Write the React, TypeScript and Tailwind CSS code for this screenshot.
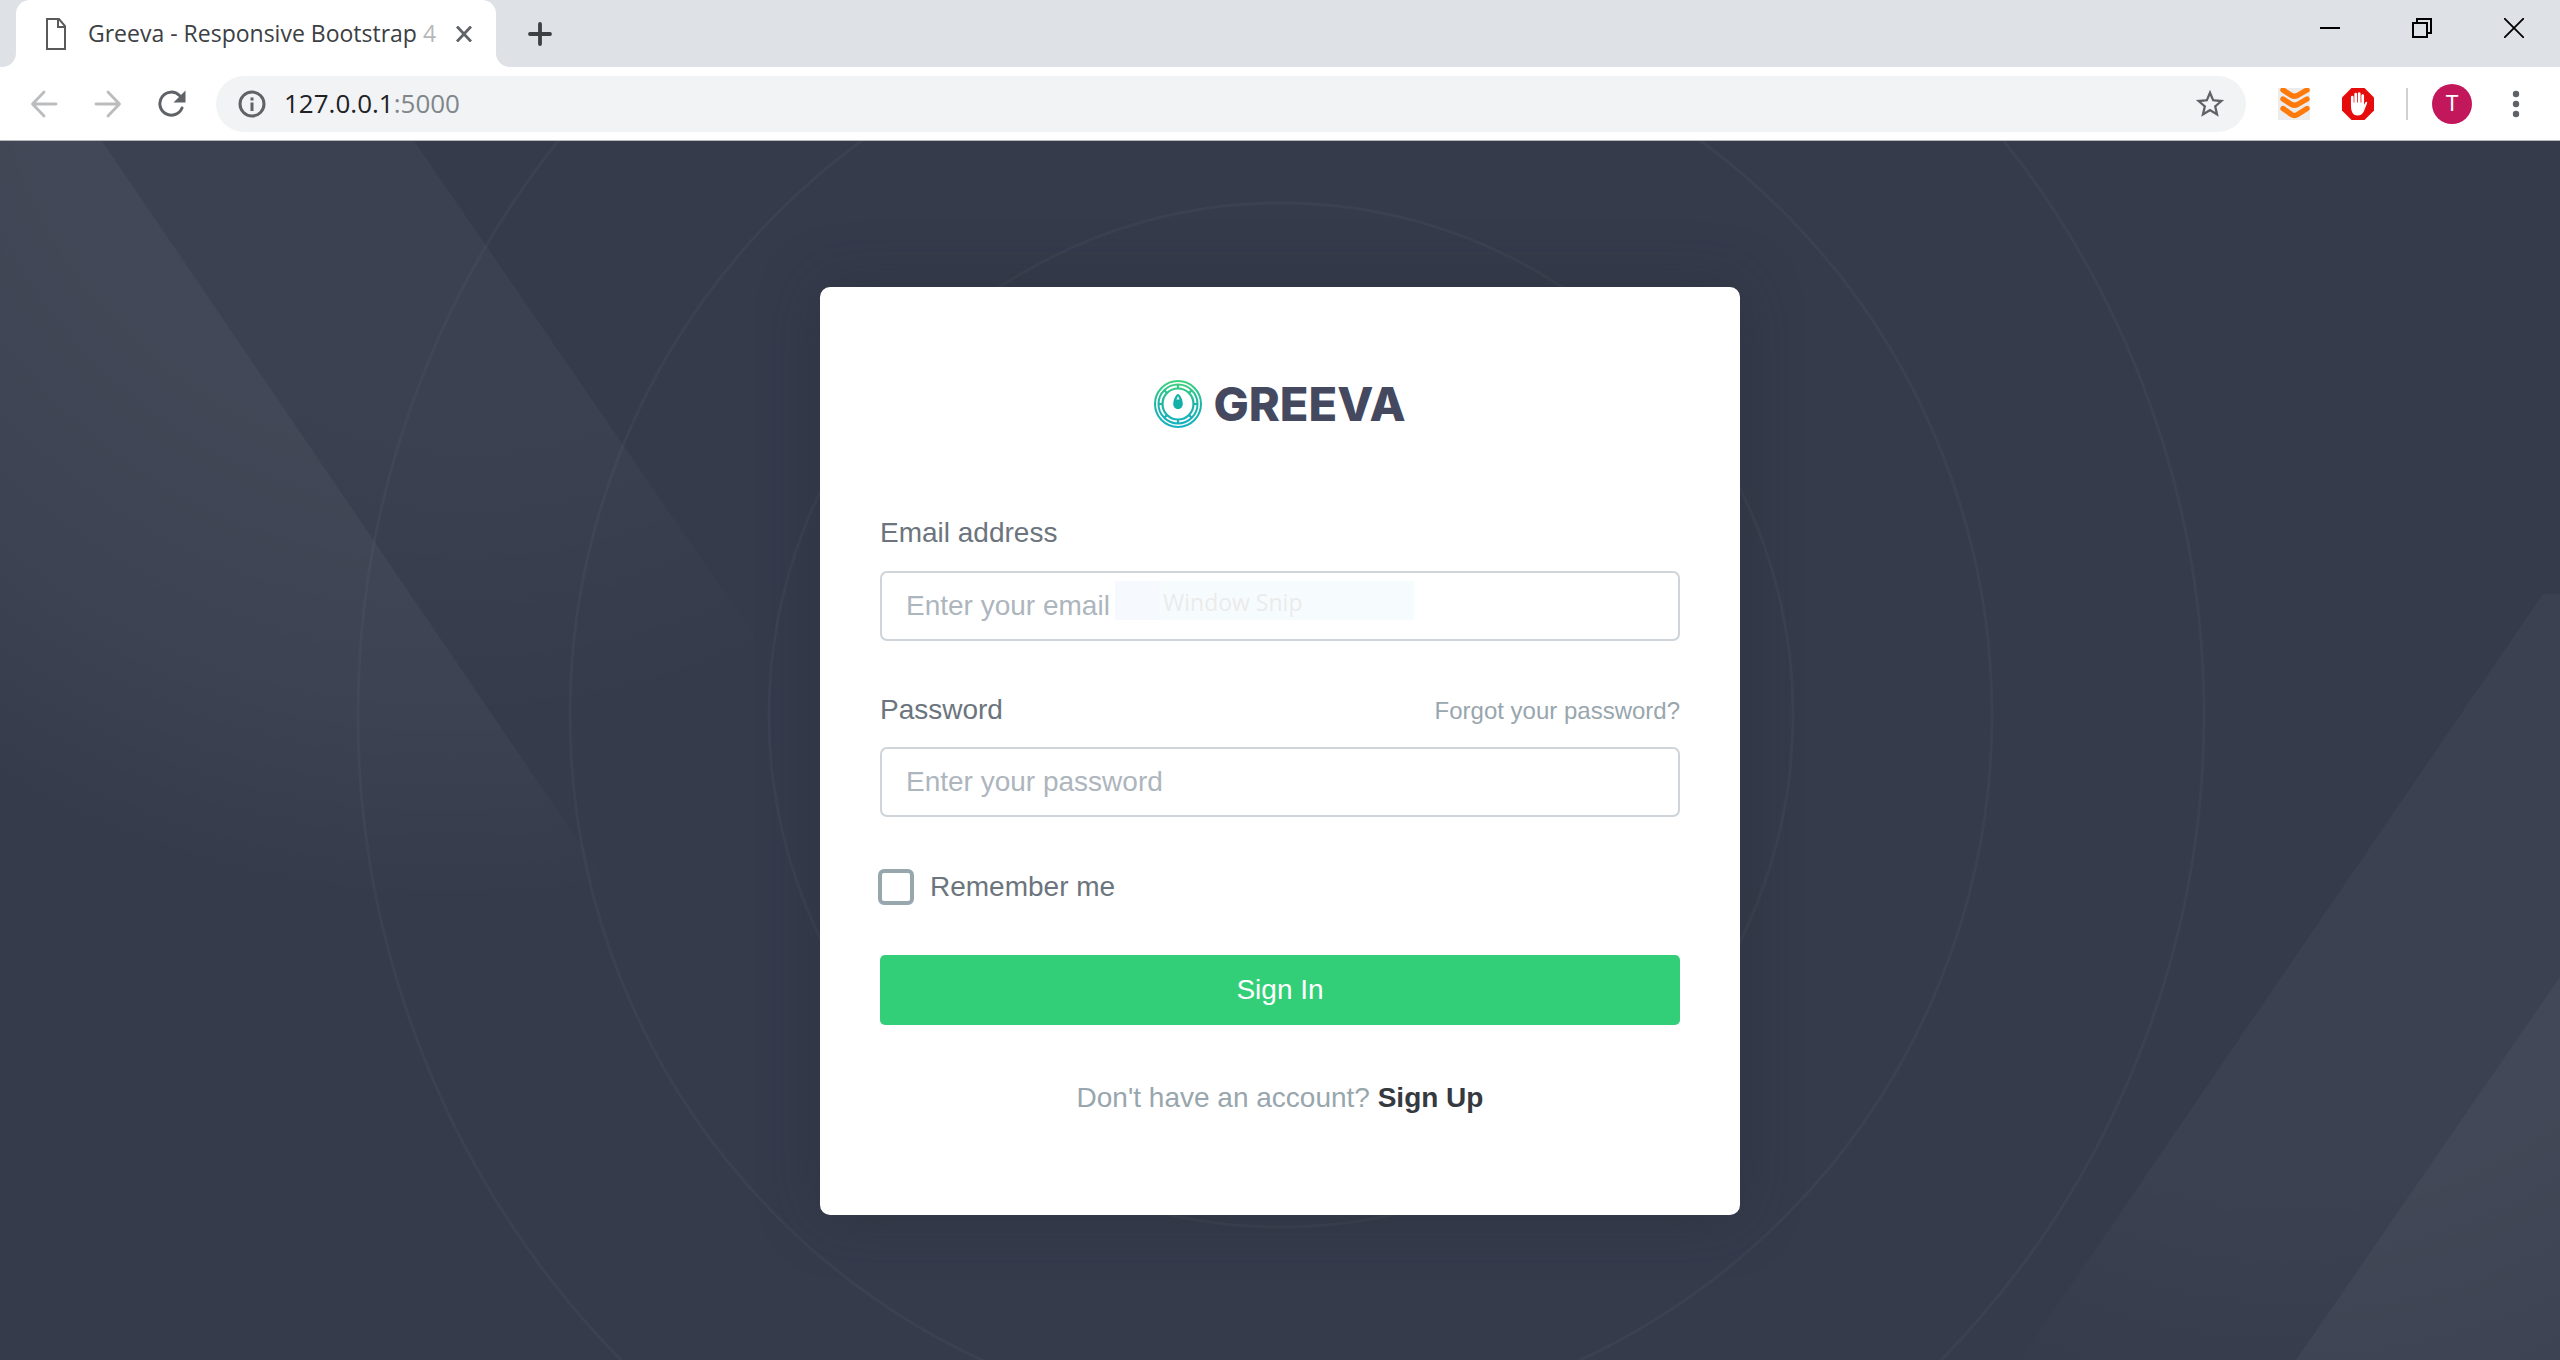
import React, { useState } from "react";

function TabStrip() {
  return (
    <header className="flex h-[67px] w-full items-stretch bg-[#dee1e6]">
      <div className="w-4 bg-white">
        <div className="h-full rounded-br-[14px] bg-[#dee1e6]" />
      </div>
      <div className="flex w-[480px] items-center rounded-t-[14px] bg-white pr-4 pl-[30px]">
        <svg className="mr-[22px] h-8 w-5" viewBox="0 0 20 32" fill="none" stroke="#5a5a5a" strokeWidth="2">
          <path d="M1 1H13L19 8V31H1Z" />
          <path d="M12 1V9H19" />
        </svg>
        <p className="font-['Open_Sans','Noto_Sans',sans-serif] text-[23px] tracking-normal whitespace-nowrap text-[#3c4043]">
          Greeva - Responsive Bootstrap <span className="text-[#b5b7b9]">4</span>
        </p>
        <button aria-label="Close tab" className="ml-auto flex h-8 w-8 items-center justify-center">
          <svg className="h-4 w-4" viewBox="0 0 16 16" stroke="#5f6368" strokeWidth="2.800">
            <path d="M1 0.500L15 15.500M15 0.500L1 15.500" />
          </svg>
        </button>
      </div>
      <div className="w-4 bg-white">
        <div className="h-full rounded-bl-[14px] bg-[#dee1e6]" />
      </div>
      <button aria-label="New tab" className="ml-3 flex w-8 items-center justify-center">
        <svg className="h-7 w-7" viewBox="0 0 28 28" stroke="#3c4043" strokeWidth="3.800" strokeLinecap="round">
          <path d="M14 4V24M4 14H24" />
        </svg>
      </button>
      <div className="ml-auto flex h-[56px]">
        <button aria-label="Minimize" className="flex w-[92px] items-center justify-center">
          <svg className="h-5 w-5" viewBox="0 0 20 20" stroke="#000" strokeWidth="2">
            <path d="M0 10H20" />
          </svg>
        </button>
        <button aria-label="Restore" className="flex w-[92px] items-center justify-center">
          <svg className="h-5 w-5" viewBox="0 0 20 20" fill="none" stroke="#000" strokeWidth="2">
            <path d="M1 5H15V19H1ZM5 5V1H19V15H15" />
          </svg>
        </button>
        <button aria-label="Close window" className="flex w-[92px] items-center justify-center">
          <svg className="h-5 w-5" viewBox="0 0 20 20" stroke="#000" strokeWidth="1.800">
            <path d="M0 0L20 20M20 0L0 20" />
          </svg>
        </button>
      </div>
    </header>
  );
}

function Toolbar() {
  return (
    <div className="flex h-[74px] w-full items-center border-b border-[#b5b7b9] bg-white pr-7 pl-7">
      <div className="flex items-center gap-8">
        <button aria-label="Back" className="flex h-8 w-8 items-center justify-center">
          <svg className="h-7 w-7" viewBox="0 0 28 28" fill="none" stroke="#babcbe" strokeWidth="2.800" strokeLinecap="round" strokeLinejoin="round">
            <path d="M26 14H3M14 2L2.500 14L14 26" />
          </svg>
        </button>
        <button aria-label="Forward" className="flex h-8 w-8 items-center justify-center">
          <svg className="h-7 w-7" viewBox="0 0 28 28" fill="none" stroke="#babcbe" strokeWidth="2.800" strokeLinecap="round" strokeLinejoin="round">
            <path d="M2 14H25M14 2L25.500 14L14 26" />
          </svg>
        </button>
        <button aria-label="Reload" className="flex h-8 w-8 items-center justify-center">
          <svg className="h-7 w-7" viewBox="0 0 28 28" fill="none" stroke="#5f6368" strokeWidth="3">
            <path d="M24 18A11.500 11.500 0 1 1 21.500 5.500" strokeLinecap="round" />
            <path d="M27.500 0.500V12.500H15.500Z" fill="#5f6368" stroke="none" />
          </svg>
        </button>
      </div>
      <div className="ml-7 flex h-[56px] min-w-0 flex-1 items-center rounded-full bg-[#f1f3f4] pr-5 pl-[22px]">
        <svg className="h-7 w-7 shrink-0" viewBox="0 0 28 28" fill="none" stroke="#5f6368" strokeWidth="3">
          <circle cx="14" cy="14" r="12" />
          <path d="M14 12.500V21M14 7.500V10.500" />
        </svg>
        <p className="ml-[18px] flex-1 font-['Open_Sans','Noto_Sans',sans-serif] text-[26px] text-[#202124]">
          127.0.0.1<span className="text-[#80868b]">:5000</span>
        </p>
        <button aria-label="Bookmark this page" className="flex h-8 w-8 items-center justify-center">
          <svg className="h-[34px] w-[34px] shrink-0" viewBox="0 0 24 24" fill="#5f6368">
            <path d="M22 9.240l-7.190-.62L12 2 9.190 8.630 2 9.240l5.460 4.730L5.820 21 12 17.270 18.180 21l-1.630-7.030L22 9.240zM12 15.400l-3.760 2.270 1-4.280-3.320-2.880 4.380-.38L12 6.100l1.710 4.040 4.380.38-3.320 2.880 1 4.280L12 15.400z" />
          </svg>
        </button>
      </div>
      <div className="ml-8 flex shrink-0 items-center">
        <button aria-label="Layers extension">
          <svg className="h-8 w-8 bg-[#ececec]" viewBox="0 0 32 32" fill="none" stroke="#ff7a0a" strokeWidth="5.400" strokeLinecap="round" strokeLinejoin="round">
            <path d="M5 2L13.500 7.500Q16.500 9 19.500 7.500L29 2M5 11L13.500 16.500Q16.500 18 19.500 16.500L29 11M5 20.500L13.500 26.500Q16.500 28.500 19.500 26.500L29 20.500" />
          </svg>
        </button>
        <button aria-label="Ad blocker" className="ml-8">
          <svg className="h-8 w-8" viewBox="0 0 32 32">
            <path d="M9.500 0H22.500L32 9.500V22.500L22.500 32H9.500L0 22.500V9.500Z" fill="#e60c0c" />
            <path d="M10.300 9V17M13.700 6V16M17.200 5.500V16M20.700 7.500V17" stroke="#fff" strokeWidth="2.700" strokeLinecap="round" />
            <path d="M9 14.500H22V17L23.400 14.200C24 13.200 25.800 13.500 25 15.500L22 23C20.800 26 18.500 27.500 15.500 27.500C11.500 27.500 9 24.500 9 18Z" fill="#fff" />
          </svg>
        </button>
        <div className="ml-8 h-8 w-[2px] bg-[#cfd1d4]" />
        <button aria-label="Profile" className="ml-6 flex h-10 w-10 items-center justify-center rounded-full bg-[#c2185b] font-['Roboto',sans-serif] text-[22px] text-white">
          T
        </button>
        <button aria-label="Browser menu" className="ml-7 flex h-8 w-8 items-center justify-center">
          <svg className="h-7 w-2" viewBox="0 0 8 28" fill="#5f6368">
            <circle cx="4" cy="4" r="3.200" />
            <circle cx="4" cy="14" r="3.200" />
            <circle cx="4" cy="24" r="3.200" />
          </svg>
        </button>
      </div>
    </div>
  );
}

function Backdrop() {
  return (
    <svg className="pointer-events-none absolute inset-0 h-full w-full" viewBox="0 0 2560 1219" preserveAspectRatio="xMidYMid slice" aria-hidden="true">
      <defs>
        <radialGradient id="beamA" gradientUnits="userSpaceOnUse" cx="450" cy="-135" r="900">
          <stop offset="0.500" stopColor="#fff" stopOpacity="0.065" />
          <stop offset="0.780" stopColor="#fff" stopOpacity="0.038" />
          <stop offset="1" stopColor="#fff" stopOpacity="0" />
        </radialGradient>
        <radialGradient id="beamB" gradientUnits="userSpaceOnUse" cx="470" cy="-92" r="680">
          <stop offset="0.550" stopColor="#fff" stopOpacity="0.032" />
          <stop offset="1" stopColor="#fff" stopOpacity="0" />
        </radialGradient>
        <radialGradient id="beamC" gradientUnits="userSpaceOnUse" cx="2290" cy="635" r="680">
          <stop offset="0.600" stopColor="#fff" stopOpacity="0.032" />
          <stop offset="1" stopColor="#fff" stopOpacity="0" />
        </radialGradient>
        <radialGradient id="beamD" gradientUnits="userSpaceOnUse" cx="2290" cy="612" r="900">
          <stop offset="0.500" stopColor="#fff" stopOpacity="0.065" />
          <stop offset="0.780" stopColor="#fff" stopOpacity="0.038" />
          <stop offset="1" stopColor="#fff" stopOpacity="0" />
        </radialGradient>
      </defs>
      <path d="M0 0H102L680 850H0Z" fill="url(#beamA)" />
      <path d="M102 0H414L900 707H583Z" fill="url(#beamB)" />
      <path d="M2560 453H2543L2020 1219H2296L2560 836Z" fill="url(#beamC)" />
      <path d="M2560 836L2296 1219H2560Z" fill="url(#beamD)" />
      <g fill="none" stroke="#fff" strokeOpacity="0.030" strokeWidth="3">
        <circle cx="1281" cy="574" r="512" />
        <circle cx="1281" cy="574" r="711" />
        <circle cx="1281" cy="574" r="923" />
      </g>
    </svg>
  );
}

function Logo() {
  return (
    <div className="flex items-center justify-center gap-[11px]">
      <svg className="h-12 w-12" viewBox="0 0 48 48" fill="none">
        <defs>
          <linearGradient id="ring" gradientUnits="userSpaceOnUse" x1="24" y1="0" x2="24" y2="48">
            <stop offset="0" stopColor="#3fd37a" />
            <stop offset="0.500" stopColor="#1bb5a4" />
            <stop offset="1" stopColor="#16b0c6" />
          </linearGradient>
        </defs>
        <g stroke="url(#ring)">
          <circle cx="24" cy="24" r="23" strokeWidth="2" />
          <circle cx="24" cy="24" r="19.500" strokeWidth="2" />
          <circle cx="24" cy="24" r="15.500" strokeWidth="2.200" />
          <path strokeWidth="2.200" d="M24.010 4.500L24 9M24.010 39L24 43.500M4.500 24.010L9 24M39 24.010L43.500 24M10.200 10.200L13.400 13.400M37.800 10.200L34.600 13.400M10.200 37.800L13.400 34.600M37.800 37.800L34.600 34.600" />
        </g>
        <path d="M24 14C26 14 28.800 20 28.800 24C28.800 27 26.500 29 24 29C21.500 29 19.200 27 19.200 24C19.200 20 22 14 24 14Z" fill="#13b0a8" />
        <path d="M24 16L25.600 19.500H22.400Z" fill="#fff" />
      </svg>
      <span className="font-['Inter',sans-serif] text-[47px] leading-[48px] font-extrabold text-[#444960]">GREEVA</span>
    </div>
  );
}

const inputClass =
  "h-[70px] w-full rounded-[7px] border-2 border-[#ced4da] bg-white px-6 text-[28px] text-[#6c757d] outline-none placeholder:text-[#adb5bd] placeholder:opacity-100";

function LoginCard() {
  const [remember, setRemember] = useState(false);
  return (
    <form
      onSubmit={(e) => e.preventDefault()}
      className="relative flex w-[920px] max-w-full flex-col rounded-[10px] bg-white px-[60px] pt-[93px] pb-[97px] shadow-[0_0_60px_0_rgba(37,42,52,0.4)]"
    >
      <Logo />
      <label htmlFor="email" className="mt-[85px] text-[28px] leading-10 text-[#6c757d]">
        Email address
      </label>
      <div className="relative mt-[18px]">
        <input id="email" type="email" placeholder="Enter your email" className={inputClass} />
        <div className="pointer-events-none absolute top-[10px] left-[235px] flex h-[39px] w-[299px] items-center border-l-[45px] border-[#f6f9fe] bg-[#f6fcfe] pt-1 pl-[3px] font-['Open_Sans','Noto_Sans',sans-serif] text-[23px] text-[#ebebeb]">
          Window Snip
        </div>
      </div>
      <div className="mt-12 flex items-center justify-between">
        <label htmlFor="password" className="text-[28px] leading-10 text-[#6c757d]">
          Password
        </label>
        <a href="#forgot" className="pt-[2px] text-[24px] leading-10 text-[#98a6ad]">
          Forgot your password?
        </a>
      </div>
      <input id="password" type="password" placeholder="Enter your password" className={"mt-4 " + inputClass} />
      <label className="mt-[50px] -ml-[2px] flex items-center gap-4 text-[28px] leading-10 text-[#6c757d]">
        <input
          type="checkbox"
          checked={remember}
          onChange={(e) => setRemember(e.target.checked)}
          className="h-9 w-9 appearance-none rounded-[6px] border-4 border-[#98a6ad] bg-white checked:bg-[#98a6ad]"
        />
        Remember me
      </label>
      <button type="submit" className="mt-12 h-[70px] w-full rounded-[5px] bg-[#32cf78] text-[28px] text-white">
        Sign In
      </button>
      <p className="mt-[53px] text-center text-[28px] leading-10 text-[#98a6ad]">
        Don't have an account?{" "}
        <a href="#signup" className="font-bold text-[#343a40]">
          Sign Up
        </a>
      </p>
    </form>
  );
}

export default function App() {
  return (
    <div className="flex min-h-screen w-full flex-col bg-[#353b4b] font-['Liberation_Sans',sans-serif]">
      <TabStrip />
      <Toolbar />
      <main className="relative flex flex-1 flex-col items-center overflow-hidden pt-[146px] pb-[145px]">
        <Backdrop />
        <LoginCard />
      </main>
    </div>
  );
}
